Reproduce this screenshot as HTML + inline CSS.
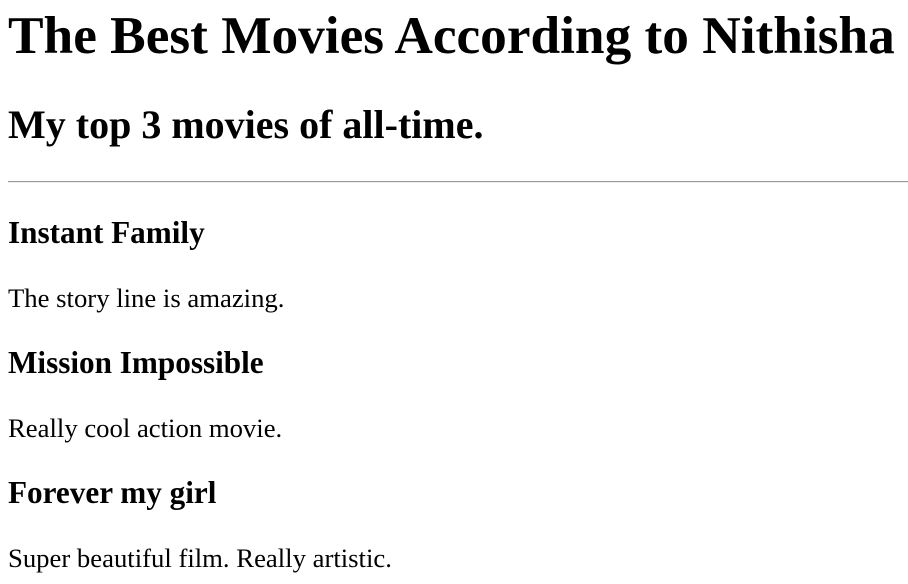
<!DOCTYPE html>
<html><head><meta charset="utf-8"><style>
html,body{margin:0;padding:0;background:#fff;width:908px;height:584px;overflow:hidden;position:relative}
div{position:absolute;left:8px;font-family:"Liberation Serif",serif;line-height:1;white-space:nowrap;color:#000}
.h1{font-size:53.3px;font-weight:bold}
.h2{font-size:40px;font-weight:bold}
.h3{font-size:31.2px;font-weight:bold}
.p{font-size:26.7px}
.hr{left:8px;right:0;top:181px;height:0;border-top:1px solid #9a9a9a;border-bottom:1px solid #eee}
</style></head><body>
<div class="h1" style="top:9.4px">The Best Movies According to Nithisha</div>
<div class="h2" style="top:104.5px">My top 3 movies of all-time.</div>
<div class="hr"></div>
<div class="h3" style="top:216.5px">Instant Family</div>
<div class="p" style="top:285px">The story line is amazing.</div>
<div class="h3" style="top:346.5px">Mission Impossible</div>
<div class="p" style="top:415px">Really cool action movie.</div>
<div class="h3" style="top:476.5px">Forever my girl</div>
<div class="p" style="top:545px">Super beautiful film. Really artistic.</div>
</body></html>
